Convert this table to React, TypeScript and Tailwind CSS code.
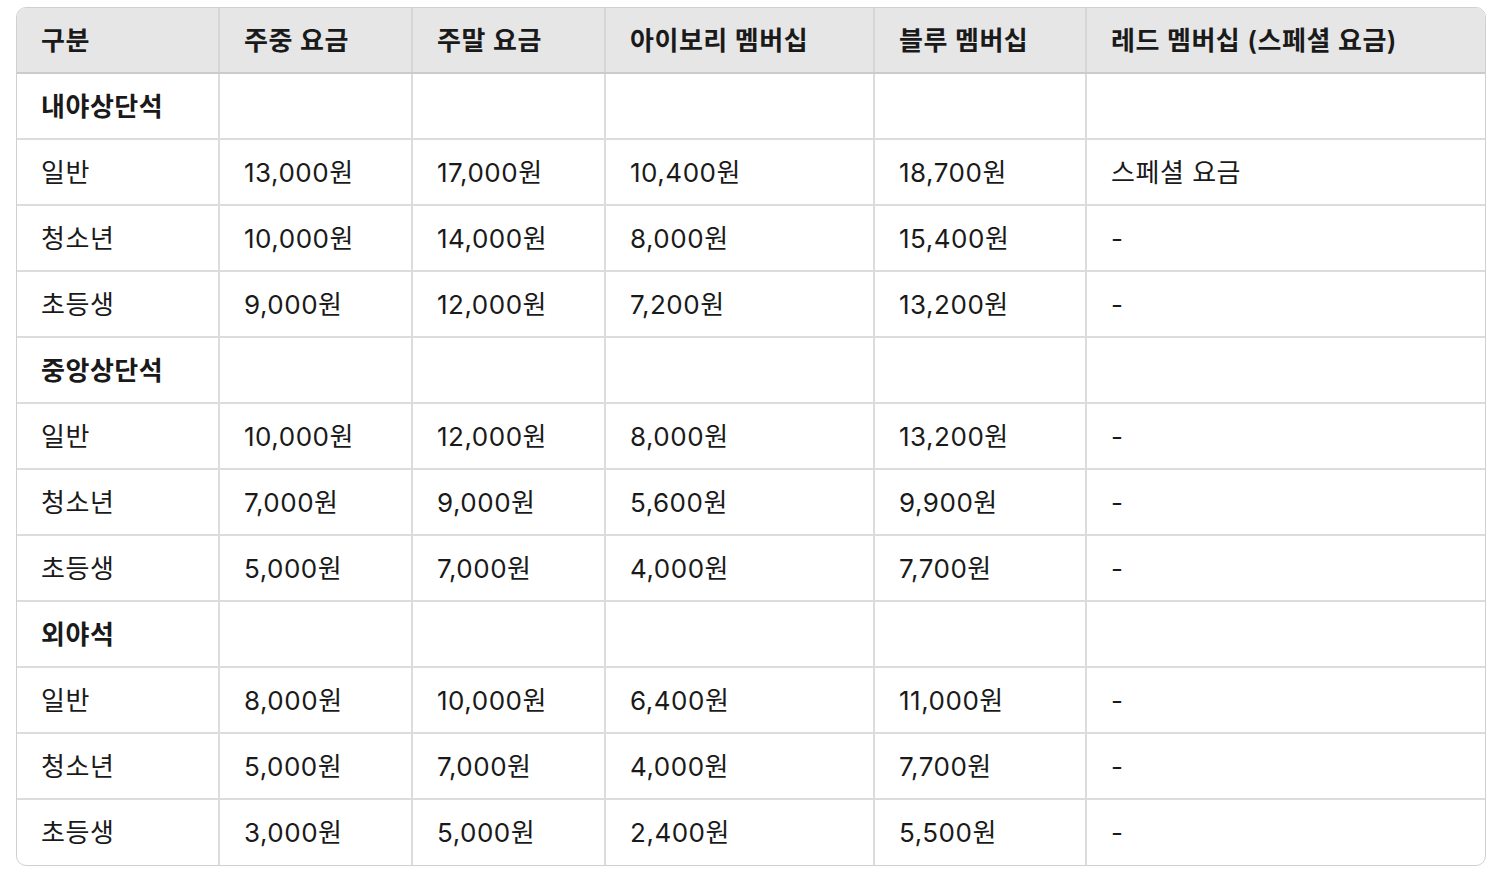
import React from "react";

const headers = ["구분", "주중 요금", "주말 요금", "아이보리 멤버십", "블루 멤버십", "레드 멤버십 (스페셜 요금)"];
const widths = ["w-[202px]", "w-[193px]", "w-[193px]", "w-[269px]", "w-[212px]", "w-[401px]"];

type Row = { group?: string; cells?: string[] };

const rows: Row[] = [
  { group: "내야상단석" },
  { cells: ["일반", "13,000원", "17,000원", "10,400원", "18,700원", "스페셜 요금"] },
  { cells: ["청소년", "10,000원", "14,000원", "8,000원", "15,400원", "-"] },
  { cells: ["초등생", "9,000원", "12,000원", "7,200원", "13,200원", "-"] },
  { group: "중앙상단석" },
  { cells: ["일반", "10,000원", "12,000원", "8,000원", "13,200원", "-"] },
  { cells: ["청소년", "7,000원", "9,000원", "5,600원", "9,900원", "-"] },
  { cells: ["초등생", "5,000원", "7,000원", "4,000원", "7,700원", "-"] },
  { group: "외야석" },
  { cells: ["일반", "8,000원", "10,000원", "6,400원", "11,000원", "-"] },
  { cells: ["청소년", "5,000원", "7,000원", "4,000원", "7,700원", "-"] },
  { cells: ["초등생", "3,000원", "5,000원", "2,400원", "5,500원", "-"] },
];

export default function App() {
  return (
    <div
      className="bg-white min-h-[872px] pt-[7px] pl-[16px] text-[#1a1a1a]"
      style={{ fontFamily: 'Inter, "Noto Sans CJK KR", "Noto Sans", sans-serif' }}
    >
      <div className="w-[1470px] rounded-[10px] border border-[#d0d0d0] overflow-hidden">
        <table className="table-fixed w-full border-collapse text-[26px] tracking-[0.02em]">
          <colgroup>
            {widths.map((w, i) => (
              <col key={i} className={w} />
            ))}
          </colgroup>
          <thead>
            <tr className="h-[65px] bg-[#e6e6e6]">
              {headers.map((h, i) => (
                <th
                  key={h}
                  className={`px-6 text-left font-semibold border-b-2 border-[#cbcbcb] ${
                    i > 0 ? "border-l-2 border-l-[#d6d6d6]" : ""
                  }`}
                >
                  {h}
                </th>
              ))}
            </tr>
          </thead>
          <tbody>
            {rows.map((r, ri) => (
              <tr key={ri} className="h-[66px]">
                {(r.cells ?? [r.group!, "", "", "", "", ""]).map((c, ci) => (
                  <td
                    key={ci}
                    className={`px-6 ${ri > 0 ? "border-t-2 border-[#dcdcdc]" : ""} ${
                      ci > 0 ? "border-l-2 border-l-[#dcdcdc]" : ""
                    } ${r.group && ci === 0 ? "font-semibold" : "font-normal"}`}
                  >
                    {c}
                  </td>
                ))}
              </tr>
            ))}
          </tbody>
        </table>
      </div>
    </div>
  );
}
